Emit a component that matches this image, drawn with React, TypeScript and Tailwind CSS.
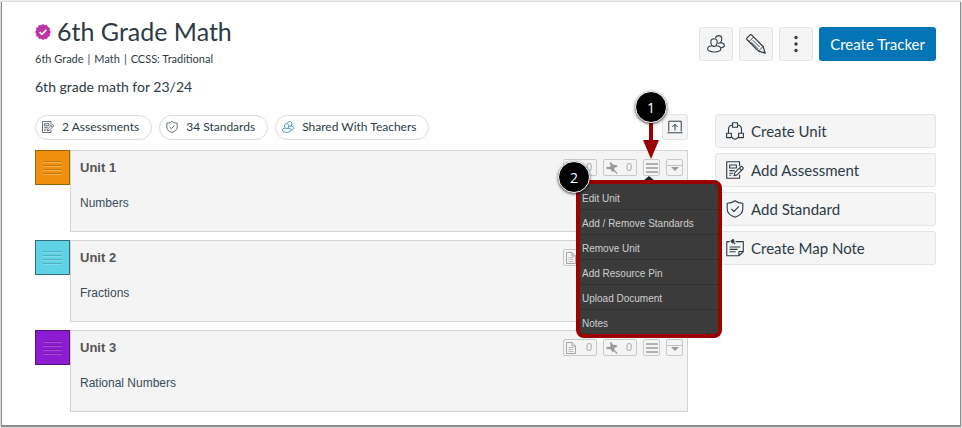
import type { ReactNode } from 'react';

interface Unit {
  title: string;
  description: string;
  swatch: string;
  line: string;
}

const units: Unit[] = [
  { title: 'Unit 1', description: 'Numbers', swatch: 'bg-[#f08f0e] border-[#99630f]', line: 'border-t-[#c4790f] border-b-[#f5b055]' },
  { title: 'Unit 2', description: 'Fractions', swatch: 'bg-[#5fd2e6] border-[#2f6f79]', line: 'border-t-[#50aebd] border-b-[#80dcec]' },
  { title: 'Unit 3', description: 'Rational Numbers', swatch: 'bg-[#8d1bd1] border-[#56117f]', line: 'border-t-[#7619ad] border-b-[#a54bdb]' },
];

const menuItems = ['Edit Unit', 'Add / Remove Standards', 'Remove Unit', 'Add Resource Pin', 'Upload Document', 'Notes'];

interface IconProps {
  className?: string;
}

function Svg({ className = 'size-[18px]', children }: IconProps & { children: ReactNode }) {
  return (
    <svg
      viewBox="0 0 18 18"
      className={`shrink-0 ${className}`}
      fill="none"
      stroke="currentColor"
      strokeWidth="1.1"
      strokeLinejoin="round"
      aria-hidden="true"
    >
      {children}
    </svg>
  );
}

function PeopleIcon({ className }: IconProps) {
  return (
    <Svg className={className}>
      <path d="M8.600 3c.3-1.400 1.500-2.400 3-2.400 1.900 0 3.200 1.400 3.200 3.300 0 1.500-.5 2.800-1.500 3.700 2.400.4 4.100 1.500 4.100 2.800 0 1.200-1.200 2-3.300 2.300" />
      <path d="M7 3.800c1.900 0 3.200 1.400 3.200 3.300 0 1.500-.6 2.900-1.500 3.700 3 .2 5.100 1.400 5.100 3 0 1.900-2.900 3.200-6.600 3.200S.6 15.700.6 13.800c0-1.600 2-2.800 4.700-3-.9-.8-1.500-2.200-1.500-3.700 0-1.900 1.300-3.300 3.200-3.300z" />
      <path d="M5.300 10.800c1.100.8 2.300.8 3.400 0M10.800 8c.9.500 1.700.3 2.500-.4" />
    </Svg>
  );
}

function PencilIcon() {
  return (
    <Svg className="size-5">
      <path d="M1 3.500 3.500 1c.5-.5 1.200-.5 1.700 0l10.200 10.200 1.800 6-6-1.800L1 5.200c-.5-.5-.5-1.200 0-1.700z" />
      <path d="m2.700 6.900 4.200-4.200M11.200 15.400l4.200-4.200M6.100 5.600l6.200 6.200M4.800 7.300l6.200 6.200M15.400 16.700l1.300-1.300" strokeWidth=".8" />
    </Svg>
  );
}

function UnitIcon() {
  return (
    <Svg>
      <path d="M6.500.7h5v4.600h-5zM.6 11.200h4.800v4.400H.6zM12.600 11.200h4.800v4.400h-4.800z" />
      <path d="M6.300 3C4 3.400 2.500 4.900 2.500 7.200v4M11.700 3c2.300.4 3.800 1.900 3.800 4.200v4M5.400 14.600c1 1.400 2.300 2.500 3.600 2.700 1.300-.2 2.600-1.300 3.600-2.700" />
    </Svg>
  );
}

function AssessmentIcon({ className }: IconProps) {
  return (
    <Svg className={className}>
      <path d="M13.600 5.300V.7H.7v16.600h12.900v-3.600" />
      <path d="M3.600 4h6.800v3H3.600zM3.400 9.600h5.200M3.400 12.200H7M3.400 14.300h1.800" />
      <path d="m8 14.700.8-3 5.900-5.900c.5-.5 1.100-.5 1.600 0l.6.6c.5.5.500 1.100 0 1.600L11 13.900zM13.500 7.100l2.200 2.200" />
    </Svg>
  );
}

function ShieldIcon({ className }: IconProps) {
  return (
    <Svg className={className}>
      <path d="M9 .7C7 2.300 4.300 3.200 1.200 3.300v5.500c0 4.200 3.200 7 7.800 8.500 4.600-1.500 7.800-4.300 7.800-8.500V3.300C13.700 3.200 11 2.300 9 .7z" />
      <path d="m5.400 9 2.500 2.500 5-5.100" />
    </Svg>
  );
}

function NoteIcon() {
  return (
    <Svg>
      <path d="M3.800 2.600H.8v14.200h12.100l4.400-4.300V2.600H9.600M12.900 16.800v-4.300h4.400M3.600 8h10.800M3.600 10.400h8M3.600 12.800h6" />
      <path d="m5 2 2.200-1.500.8 2-1.700 1.300zM7.300 3.300l1.900 1.700" fill="currentColor" />
    </Svg>
  );
}

function ExportIcon() {
  return (
    <Svg className="size-4">
      <path d="M2 14V2.500h14V14M.5 15.500h17M9 13V6M6 9l3-3 3 3" />
    </Svg>
  );
}

function VerifiedIcon() {
  return (
    <svg viewBox="0 0 16 16" className="size-4 shrink-0" aria-hidden="true">
      <path
        fill="#bf32a4"
        d="m8 0 1.800 1.300 2.200-.2.900 2 2 .9-.2 2.200L16 8l-1.300 1.800.2 2.200-2 .9-.9 2-2.200-.2L8 16l-1.800-1.300-2.200.2-.9-2-2-.9.200-2.200L0 8l1.300-1.800L1.100 4l2-.9.9-2 2.200.2z"
      />
      <path d="m4.600 8.200 2.300 2.200 4.400-4.500" fill="none" stroke="#fff" strokeWidth="1.700" />
    </svg>
  );
}

function DocIcon() {
  return (
    <svg viewBox="0 0 10 12" className="h-3 w-[10px]" fill="none" stroke="#a3a3a3" aria-hidden="true">
      <path d="M.5.5H6L9.500 4v7.500h-9zM6 .5V4h3.500" />
      <path d="M2.500 5.500h5M2.500 7.500h5M2.500 9.500h5" strokeWidth=".7" />
    </svg>
  );
}

function PinIcon() {
  return (
    <svg viewBox="0 0 12 12" className="size-3" aria-hidden="true">
      <path fill="#9a9a9a" d="m4.200.2 1.200.2 1.700 2.300 3.200.3 1.200 1.300-1.200.9-1.800.5-.4 3.400-1.300 1.100-2.300-3-3.900-.3-.4-1.300 1.200-.8 2.500.2.800-1.600L3.600 1.300z" />
      <path d="m7 7.300 4.200 4.200" stroke="#9a9a9a" strokeWidth="1.200" />
    </svg>
  );
}

function Pill({ icon, children }: { icon: ReactNode; children: ReactNode }) {
  return (
    <button className="flex h-[25px] items-center gap-2 rounded-full border border-[#d8dbdd] pl-[6px] pr-3 text-[12px]">
      {icon}
      {children}
    </button>
  );
}

function ToolButton({ label, children }: { label: string; children: ReactNode }) {
  return (
    <button aria-label={label} className="flex size-[34px] items-center justify-center rounded-[3px] border border-[#e3e4e5] bg-[#f5f5f5]">
      {children}
    </button>
  );
}

function SideButton({ icon, children }: { icon: ReactNode; children: ReactNode }) {
  return (
    <button className="flex h-[34px] items-center gap-[7px] rounded-[3px] border border-[#e3e4e5] bg-[#f5f5f5] px-[10px] text-[15px]">
      {icon}
      {children}
    </button>
  );
}

function Badge({ children, className }: { children: ReactNode; className: string }) {
  return (
    <span
      className={`absolute z-20 flex size-8 items-center justify-center rounded-full border border-white bg-black font-['Open_Sans',sans-serif] text-[14px] text-white shadow-[0_1px_3px_rgba(0,0,0,0.7)] ${className}`}
    >
      {children}
    </span>
  );
}

function UnitMenu() {
  return (
    <div className="absolute -right-[62px] top-[21px] z-10 w-[146px]">
      <span className="absolute -top-1 left-[67px] border-x-[6px] border-b-[5px] border-x-transparent border-b-[#222]" />
      <ul className="relative overflow-hidden rounded-lg border-4 border-[#990000] bg-[#3b3b3b] pt-px text-[10px] text-[#cfcfcf]">
        {menuItems.map((item) => (
          <li key={item} className="border-b border-[#303030] last:border-b-0">
            <button className="block h-6 w-full whitespace-nowrap px-[2px] pt-[3px] text-left">{item}</button>
          </li>
        ))}
      </ul>
    </div>
  );
}

function UnitRow({ unit, open }: { unit: Unit; open: boolean }) {
  const box = 'flex h-[17px] items-center rounded-[2px] border border-[#c9c9c9]';
  return (
    <div className="flex items-start font-['Liberation_Sans',Arial,sans-serif]">
      <button aria-label={`Move ${unit.title}`} className={`flex size-[35px] shrink-0 flex-col items-center justify-center gap-[2px] border ${unit.swatch}`}>
        {[0, 1, 2, 3].map((i) => (
          <span key={i} className={`h-[2px] w-[19px] border-y ${unit.line}`} />
        ))}
      </button>
      <section className="min-h-[82px] flex-1 border border-[#d3d3d3] bg-[#f4f4f4] pl-[9px] pr-1 pt-2">
        <div className="flex h-[17px] items-center justify-between">
          <h2 className="text-[13px] font-bold text-[#555]">{unit.title}</h2>
          <div className="flex text-[11px] text-[#aaa]">
            <button aria-label="Documents" className={`${box} mr-[6px] w-[34px] justify-between pl-[2px] pr-1`}>
              <DocIcon />0
            </button>
            <button aria-label="Resource pins" className={`${box} mr-[6px] w-[34px] justify-between pl-[2px] pr-1`}>
              <PinIcon />0
            </button>
            <div className="relative mr-[6px]">
              <button aria-label="Unit menu" className={`${box} w-[17px] flex-col justify-center gap-[2px]`}>
                <span className="h-[2px] w-3 bg-[#b0b0b0]" />
                <span className="h-[2px] w-3 bg-[#b0b0b0]" />
                <span className="h-[2px] w-3 bg-[#b0b0b0]" />
              </button>
              {open && (
                <>
                  <UnitMenu />
                  <svg viewBox="0 0 16 36" className="absolute -top-9 left-0 z-10 h-9 w-4" fill="#990000" aria-hidden="true">
                    <path d="M6 0h4v17h6L8 36 0 17h6z" />
                  </svg>
                  <Badge className="-left-2 -top-[68px]">1</Badge>
                  <Badge className="-left-[85px] top-[2px]">2</Badge>
                </>
              )}
            </div>
            <button aria-label="Collapse" className={`${box} w-[17px] flex-col pt-[5px]`}>
              <span className="h-px w-full bg-[#c0c0c0]" />
              <span className="mt-px border-x-4 border-t-4 border-x-transparent border-t-[#999]" />
            </button>
          </div>
        </div>
        <p className="mt-[19px] text-[12px] leading-4 text-[#394b58]">{unit.description}</p>
      </section>
    </div>
  );
}

export default function App() {
  return (
    <div className="bg-[#ececec] pb-[3px] pl-[2px] pr-[2px] pt-[2px] font-[Lato,sans-serif] text-[#2d3b45]">
      <main className="min-h-[423px] bg-white pb-3 pl-[33px] pr-6 pt-[14px] shadow-[0_1px_1px_1px_rgba(0,0,0,0.4)]">
        <header className="flex items-start justify-between">
          <div>
            <h1 className="flex h-8 items-center gap-[6px] text-[25px]">
              <VerifiedIcon />
              6th Grade Math
            </h1>
            <p className="mt-1 flex gap-1 text-[11px] leading-[14px]">
              <span>6th Grade</span>
              <span>|</span>
              <span>Math</span>
              <span>|</span>
              <span>CCSS: Traditional</span>
            </p>
            <p className="mt-[11px] text-[14px] leading-5">6th grade math for 23/24</p>
          </div>
          <div className="mt-[11px] flex gap-[6px]">
            <ToolButton label="People">
              <PeopleIcon />
            </ToolButton>
            <ToolButton label="Edit">
              <PencilIcon />
            </ToolButton>
            <ToolButton label="More options">
              <svg viewBox="0 0 4 18" className="h-[18px] w-1" fill="currentColor" aria-hidden="true">
                <circle cx="2" cy="2.500" r="1.700" />
                <circle cx="2" cy="9" r="1.700" />
                <circle cx="2" cy="15.500" r="1.700" />
              </svg>
            </ToolButton>
            <button className="h-[34px] rounded-[3px] bg-[#0374b5] px-[11px] text-[15px] text-white">Create Tracker</button>
          </div>
        </header>

        <div className="mt-[17px] flex gap-[27px]">
          <div className="min-w-0 flex-1">
            <div className="flex items-center justify-between">
              <div className="flex gap-[7px]">
                <Pill icon={<AssessmentIcon className="size-3" />}>2 Assessments</Pill>
                <Pill icon={<ShieldIcon className="size-3" />}>34 Standards</Pill>
                <Pill icon={<PeopleIcon className="size-3 text-[#0374b5]" />}>Shared With Teachers</Pill>
              </div>
              <button aria-label="Export" className="flex size-[26px] items-center justify-center rounded-[3px] border border-[#e3e4e5] bg-[#f5f5f5]">
                <ExportIcon />
              </button>
            </div>
            <div className="mt-[10px] space-y-2">
              {units.map((unit, i) => (
                <UnitRow key={unit.title} unit={unit} open={i === 0} />
              ))}
            </div>
          </div>
          <aside className="flex w-[221px] flex-col gap-[5px]">
            <SideButton icon={<UnitIcon />}>Create Unit</SideButton>
            <SideButton icon={<AssessmentIcon />}>Add Assessment</SideButton>
            <SideButton icon={<ShieldIcon />}>Add Standard</SideButton>
            <SideButton icon={<NoteIcon />}>Create Map Note</SideButton>
          </aside>
        </div>
      </main>
    </div>
  );
}
